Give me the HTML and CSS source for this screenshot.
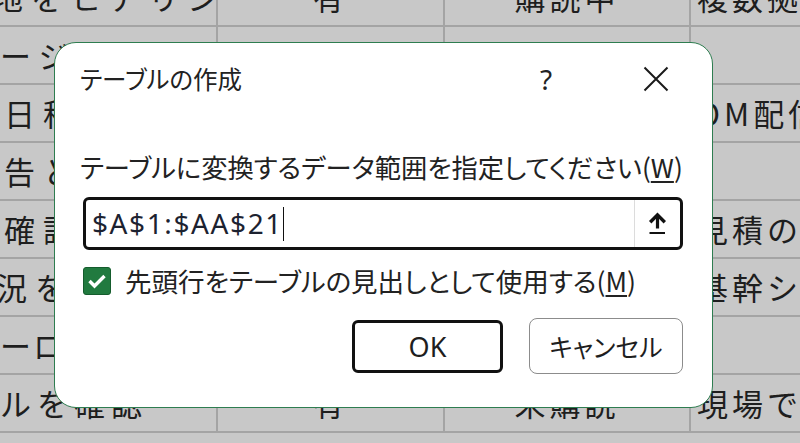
FILE: index.html
```html
<!DOCTYPE html>
<html lang="ja">
<head>
<meta charset="utf-8">
<title>テーブルの作成</title>
<link rel="stylesheet" href="styles.css">
</head>
<body>
<div class="sheet">
  <div class="cell c1 r0">地をヒアリン</div><div class="cell c2">有</div><div class="cell c3">購読中</div><div class="cell c4">複数拠</div>
  <div class="cell c1 r1">ージ</div><div class="cell c2"></div><div class="cell c3"></div><div class="cell c4"></div>
  <div class="cell c1 r2">日程</div><div class="cell c2"></div><div class="cell c3"></div><div class="cell c4">OM配信</div>
  <div class="cell c1 r3">告と</div><div class="cell c2"></div><div class="cell c3"></div><div class="cell c4"></div>
  <div class="cell c1 r4">確認</div><div class="cell c2"></div><div class="cell c3"></div><div class="cell c4">見積の</div>
  <div class="cell c1 r5">況を</div><div class="cell c2"></div><div class="cell c3"></div><div class="cell c4">基幹シ</div>
  <div class="cell c1 r6">ーロ</div><div class="cell c2"></div><div class="cell c3"></div><div class="cell c4"></div>
  <div class="cell c1 r7">ルを確認</div><div class="cell c2">有</div><div class="cell c3">未購読</div><div class="cell c4">現場で</div>
</div>

<div class="dialog" role="dialog" aria-label="テーブルの作成">
  <div class="header">
    <div class="title">テーブルの作成</div>
    <div class="help">?</div>
    <div class="close" aria-label="閉じる">
      <svg width="26" height="26" viewBox="0 0 26 26"><path d="M1.5 1.5 L24.5 24.5 M24.5 1.5 L1.5 24.5" stroke="#1a1a1a" stroke-width="2" fill="none"/></svg>
    </div>
  </div>
  <div class="label">テーブルに変換するデータ範囲を指定してください(<u>W</u>)</div>
  <div class="range">
    <div class="range-text">$A$1:$AA$21<span class="caret"></span></div>
    <div class="range-btn">
      <svg width="20" height="24" viewBox="0 0 20 24"><path d="M2.2 10.2 L9.5 2.8 L16.8 10.2" stroke="#111" stroke-width="3.4" fill="none" stroke-linejoin="miter"/><path d="M9.5 4 V16.5" stroke="#111" stroke-width="3.2"/><path d="M1.5 21 H17" stroke="#111" stroke-width="2"/></svg>
    </div>
  </div>
  <div class="check-row">
    <div class="checkbox">
      <svg width="20" height="16" viewBox="0 0 20 16"><path d="M2.5 8 L7.5 13 L17.5 3" stroke="#fff" stroke-width="3.4" fill="none"/></svg>
    </div>
    <div class="check-label">先頭行をテーブルの見出しとして使用する(<u>M</u>)</div>
  </div>
  <div class="buttons">
    <div class="btn btn-ok">OK</div>
    <div class="btn btn-cancel">キャンセル</div>
  </div>
</div>
</body>
</html>
```

FILE: styles.css
```css
html, body {
  margin: 0;
  padding: 0;
}
body {
  width: 800px;
  height: 443px;
  overflow: hidden;
  position: relative;
  background: #c8c8c8;
  font-family: "Noto Sans CJK JP", "Noto Sans", sans-serif;
  color: #1a1a1a;
}

/* spreadsheet background */
.sheet {
  display: grid;
  grid-template-columns: 218px 227px 246px 1fr;
  grid-auto-rows: 58px;
  margin-top: -31px;
  height: 474px;
  overflow: hidden;
}
.cell {
  box-sizing: border-box;
  border-right: 2px solid #a4a4a4;
  border-bottom: 2px solid #a4a4a4;
  background: #c8c8c8;
  font-size: 31px;
  line-height: 56px;
  white-space: nowrap;
  overflow: hidden;
  color: #1e1e1e;
}
.c1 {
  letter-spacing: 8px;
  padding-left: 4px;
}
.r0 { text-indent: -12px; }
.r1 { text-indent: -4px; }
.r5 { text-indent: -8px; }
.r6 { text-indent: -4px; letter-spacing: 2px; }
.r7 { text-indent: -4px; letter-spacing: 6px; }
.c2, .c3 {
  text-align: center;
  letter-spacing: 4px;
}
.c4 {
  border-right: none;
  padding-left: 6px;
  letter-spacing: 4px;
}

/* dialog */
.dialog {
  position: absolute;
  left: 54px;
  top: 42px;
  width: 659px;
  height: 366px;
  box-sizing: border-box;
  background: #ffffff;
  border: 1.5px solid #2e7d50;
  border-radius: 22px;
  padding: 0 28px 0 28px;
  font-feature-settings: "palt";
}
.header {
  display: flex;
  align-items: center;
  height: 71px;
}
.title {
  flex: 1;
  font-size: 24.5px;
  color: #222;
  margin-left: -3px;
}
.help {
  width: 40px;
  text-align: center;
  font-family: "Noto Sans", sans-serif;
  font-size: 28px;
  color: #222;
  margin-right: 70px;
}
.close {
  width: 40px;
  display: flex;
  justify-content: center;
  margin-right: 8px;
}
.label {
  margin-top: 36px;
  margin-left: -3px;
  font-size: 26.3px;
  line-height: 34px;
  color: #222;
  white-space: nowrap;
}
.label u, .check-label u {
  text-underline-offset: 3px;
  text-decoration-thickness: 1.5px;
}
.range {
  margin-top: 13px;
  width: 600px;
  height: 53px;
  box-sizing: border-box;
  border: 3px solid #111;
  border-radius: 6px;
  display: flex;
}
.range-text {
  flex: 1;
  padding-left: 6px;
  font-family: "Noto Sans", sans-serif;
  font-size: 28px;
  letter-spacing: 1.6px;
  line-height: 47px;
  color: #1c2230;
  display: flex;
  align-items: center;
}
.caret {
  display: inline-block;
  width: 1.5px;
  height: 34px;
  background: #111;
  margin-left: 0;
}
.range-btn {
  width: 45px;
  border-left: 1px solid #dcdcdc;
  display: flex;
  align-items: center;
  justify-content: center;
}
.check-row {
  margin-top: 14px;
  display: flex;
  align-items: center;
  height: 34px;
}
.checkbox {
  width: 28px;
  height: 28px;
  box-sizing: border-box;
  background: #217a3f;
  border: 1.5px solid #155c2d;
  border-radius: 3px;
  display: flex;
  align-items: center;
  justify-content: center;
  margin-right: 14px;
}
.check-label {
  font-size: 26.5px;
  color: #222;
  line-height: 34px;
  white-space: nowrap;
}
.buttons {
  margin-top: 20px;
  width: 600px;
  display: flex;
  justify-content: flex-end;
  align-items: center;
  gap: 26px;
}
.btn {
  box-sizing: border-box;
  display: flex;
  align-items: center;
  justify-content: center;
  color: #1e1e1e;
}
.btn-ok {
  width: 151px;
  height: 53px;
  border: 3px solid #111;
  border-radius: 6px;
  font-family: "Noto Sans", sans-serif;
  font-size: 27px;
}
.btn-cancel {
  width: 154px;
  height: 56px;
  border: 1.5px solid #8c8c8c;
  border-radius: 8px;
  font-size: 25px;
}
```
